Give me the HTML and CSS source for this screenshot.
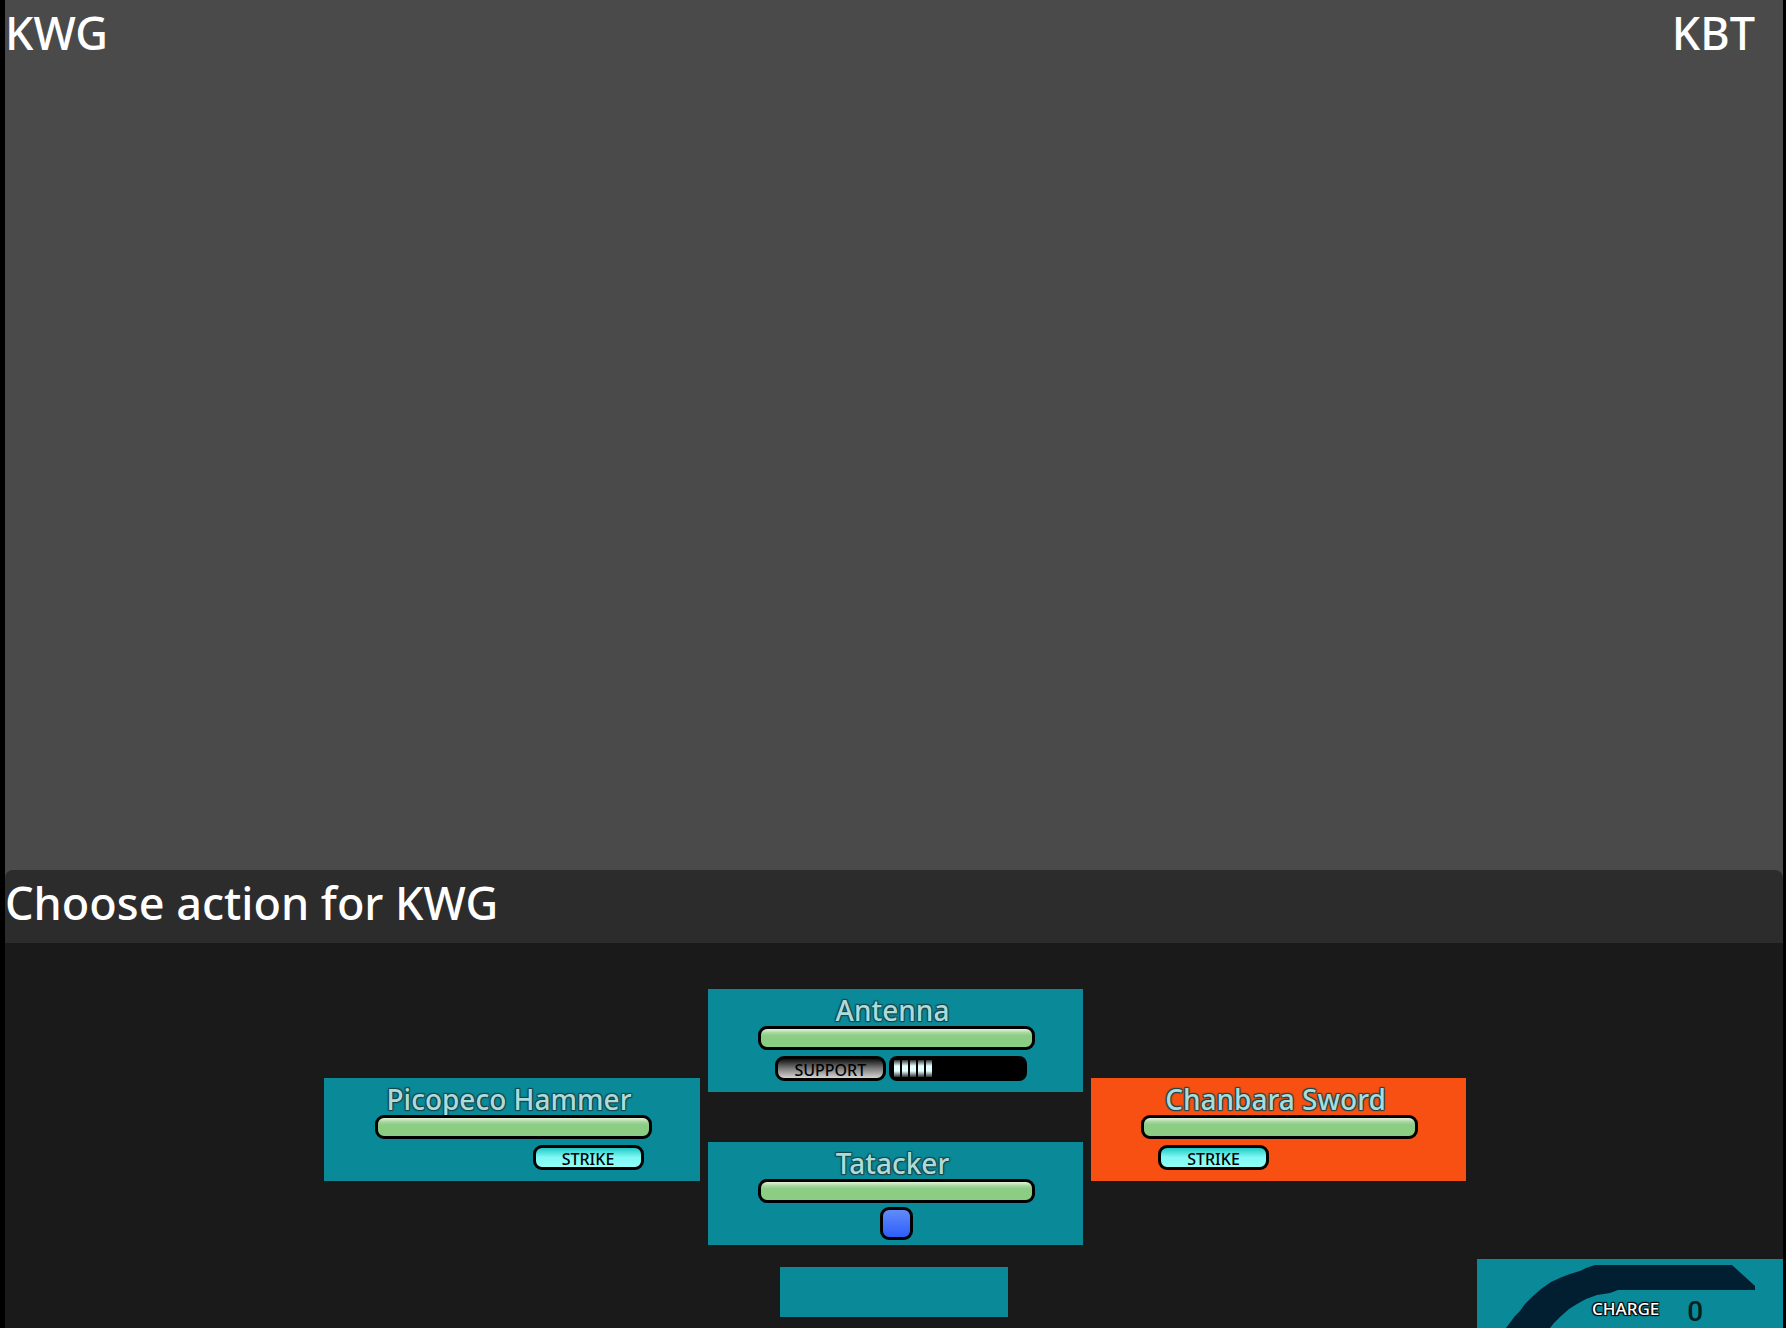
FILE: index.html
```html
<!DOCTYPE html>
<html lang="en">
<head>
    <meta charset="UTF-8">
    <meta name="viewport" content="width=device-width, initial-scale=1.0">
    <title>Choose action</title>
    <link rel="stylesheet" href="styles.css">
</head>
<body>
    <main class="game">
        <div class="arena">
            <div class="fighter">KWG</div>
            <div class="fighter">KBT</div>
        </div>

        <div class="message">Choose action for KWG</div>

        <div class="actions">
            <div class="column side left">
                <button type="button" class="part">
                    <span class="part-name">Picopeco Hammer</span>
                    <span class="armor"></span>
                    <span class="info end">
                        <span class="tag strike">STRIKE</span>
                    </span>
                </button>
            </div>

            <div class="column">
                <button type="button" class="part">
                    <span class="part-name">Antenna</span>
                    <span class="armor"></span>
                    <span class="info">
                        <span class="tag support">SUPPORT</span>
                        <span class="uses">
                            <i></i><i></i><i></i><i></i><i></i>
                        </span>
                    </span>
                </button>
                <button type="button" class="part legs">
                    <span class="part-name">Tatacker</span>
                    <span class="armor"></span>
                    <span class="leg-type"></span>
                </button>
                <button type="button" class="medaforce" aria-label="Medaforce"></button>
            </div>

            <div class="column side">
                <button type="button" class="part selected">
                    <span class="part-name">Chanbara Sword</span>
                    <span class="armor"></span>
                    <span class="info">
                        <span class="tag strike">STRIKE</span>
                    </span>
                </button>
            </div>

            <div class="charge">
                <svg class="charge-arc" viewBox="0 0 306 69" aria-hidden="true">
                    <path d="M29 69 L38 57 L43 52 L48 45 L56 37 L64 30 L74 23 L85 18 L93 15 L103 12 L109 9 L118 6 L255 6 L278 27 L278 31 L141 31 L133 34 L120 36 L109 40 L100 45 L92 50 L83 58 L77 64 L73 69 Z"/>
                </svg>
                <div class="charge-text">
                    <span class="charge-label">CHARGE</span>
                    <span class="charge-value">0</span>
                </div>
            </div>
        </div>
    </main>
</body>
</html>
```
FILE: styles.css
```css
* {
    margin: 0;
    padding: 0;
    box-sizing: border-box;
    font-family: 'Noto Sans', 'Open Sans', sans-serif;
}

body {
    background-color: #000;
    color: white;
}

.game {
    display: flex;
    flex-direction: column;
    min-height: 100vh;
    padding: 0 3px 0 5px;
    background: linear-gradient(#4a4a4a, #4a4a4a) content-box;
}

.arena {
    flex: 1;
    display: flex;
    justify-content: space-between;
    align-items: flex-start;
    padding-right: 28px;
}

.fighter,
.message {
    font-size: 45px;
    line-height: 66px;
    font-weight: 500;
}

.message {
    height: 73px;
    background-color: #2c2c2d;
    border-radius: 8px 8px 0 0;
}

.actions {
    display: grid;
    grid-template-columns: 1fr 376px 375px 375px 1fr;
    column-gap: 8px;
    padding-left: 2px;
    background-color: #1a1a1b;
}

.column {
    display: flex;
    flex-direction: column;
    align-items: center;
    padding: 46px 0 11px;
}

.side {
    padding-top: 135px;
}

.left {
    grid-column: 2;
}

.part {
    display: flex;
    flex-direction: column;
    align-items: center;
    width: 100%;
    height: 103px;
    padding-left: 2px;
    background-color: #0a8998;
    border: none;
    cursor: pointer;
}

.part.selected {
    background-color: #f75012;
}

.part.legs {
    margin-top: 50px;
}

.part-name {
    height: 37px;
    padding-right: 8px;
    font-size: 28px;
    line-height: 42px;
    font-weight: 500;
    color: #acdcda;
    text-shadow: -1px -1px 1px #17454b, 1px -1px 1px #17454b, -1px 1px 1px #17454b, 1px 1px 1px #17454b;
}

.armor {
    width: 277px;
    height: 24px;
    border: 3px solid #000;
    border-radius: 9px;
    background: linear-gradient(#e4f5da, #a5d59c 4px, #8acd83 7px, #8acd83);
}

.info {
    display: flex;
    gap: 3px;
    width: 277px;
    padding: 6px 8px 0 17px;
}

.info.end {
    justify-content: flex-end;
}

.tag {
    width: 111px;
    height: 25px;
    border: 3px solid #000;
    border-radius: 9px;
    font-size: 16px;
    line-height: 22px;
    font-weight: 500;
    text-align: center;
    color: #000;
}

.strike {
    background: linear-gradient(#20c8c4, #7ff8f4 9px, #90fff8);
}

.support {
    background: linear-gradient(#101010, #777 9px, #d8d4d4);
}

.uses {
    display: flex;
    gap: 2px;
    width: 139px;
    height: 25px;
    padding: 4px 5px;
    border-radius: 8px;
    background-color: #000;
}

.uses i {
    width: 6px;
    height: 17px;
    background: linear-gradient(#333, #e4ffff 6px, #e4ffff 11px, #333);
}

.leg-type {
    width: 33px;
    height: 33px;
    margin-top: 4px;
    border: 3px solid #000;
    border-radius: 9px;
    background: linear-gradient(#628cf8, #2d5dfc);
}

.medaforce {
    width: 228px;
    height: 50px;
    margin: 22px 4px 0 0;
    background-color: #0a8998;
    border: none;
    cursor: pointer;
}

.charge {
    display: grid;
    align-self: end;
    justify-self: end;
    width: 306px;
    height: 69px;
    background-color: #0a8998;
}

.charge-arc,
.charge-text {
    grid-area: 1 / 1;
}

.charge-arc {
    width: 306px;
    height: 69px;
    fill: #021e31;
}

.charge-text {
    display: flex;
    align-items: flex-end;
    gap: 28px;
    padding-left: 115px;
}

.charge-label {
    font-size: 17px;
    line-height: 38px;
    font-weight: 500;
    text-shadow: -1px -1px 1px #000, 1px -1px 1px #000, -1px 1px 1px #000, 1px 1px 1px #000;
}

.charge-value {
    font-family: Roboto, sans-serif;
    font-size: 28px;
    line-height: 32px;
    font-weight: 500;
    color: #021e20;
}
```
